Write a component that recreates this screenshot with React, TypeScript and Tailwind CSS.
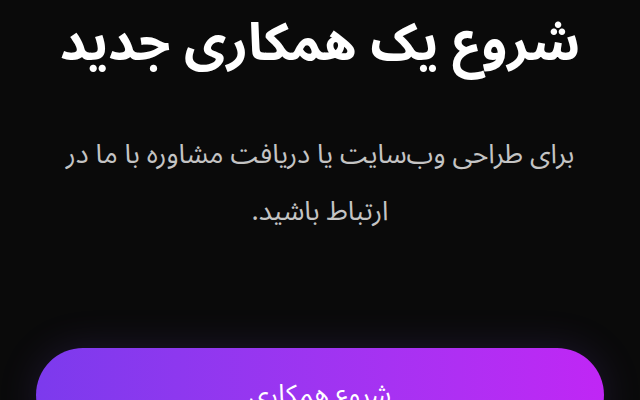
export default function App() {
  return (
    <div
      dir="rtl"
      className="min-h-screen bg-[#0a0a0a] px-9 pt-3 text-center"
      style={{ fontFamily: '"Noto Sans Arabic", "Noto Sans", sans-serif' }}
    >
      <h2 className="text-[52px] font-bold leading-[64px] text-white">
        شروع یک همکاری جدید
      </h2>

      <p className="mx-auto mt-[50px] max-w-[540px] text-[27px] leading-[57px] text-[#c4c4c4]">
        برای طراحی وب‌سایت یا دریافت مشاوره با ما در ارتباط باشید.
      </p>

      <div className="mt-[108px]">
        <button className="w-full rounded-full bg-gradient-to-l from-[#c026f5] to-[#7c3aed] py-[29px] text-[26px] leading-9 text-white shadow-[0_0_40px_rgba(139,92,246,0.15)]">
          شروع همکاری
        </button>
      </div>
    </div>
  );
}
